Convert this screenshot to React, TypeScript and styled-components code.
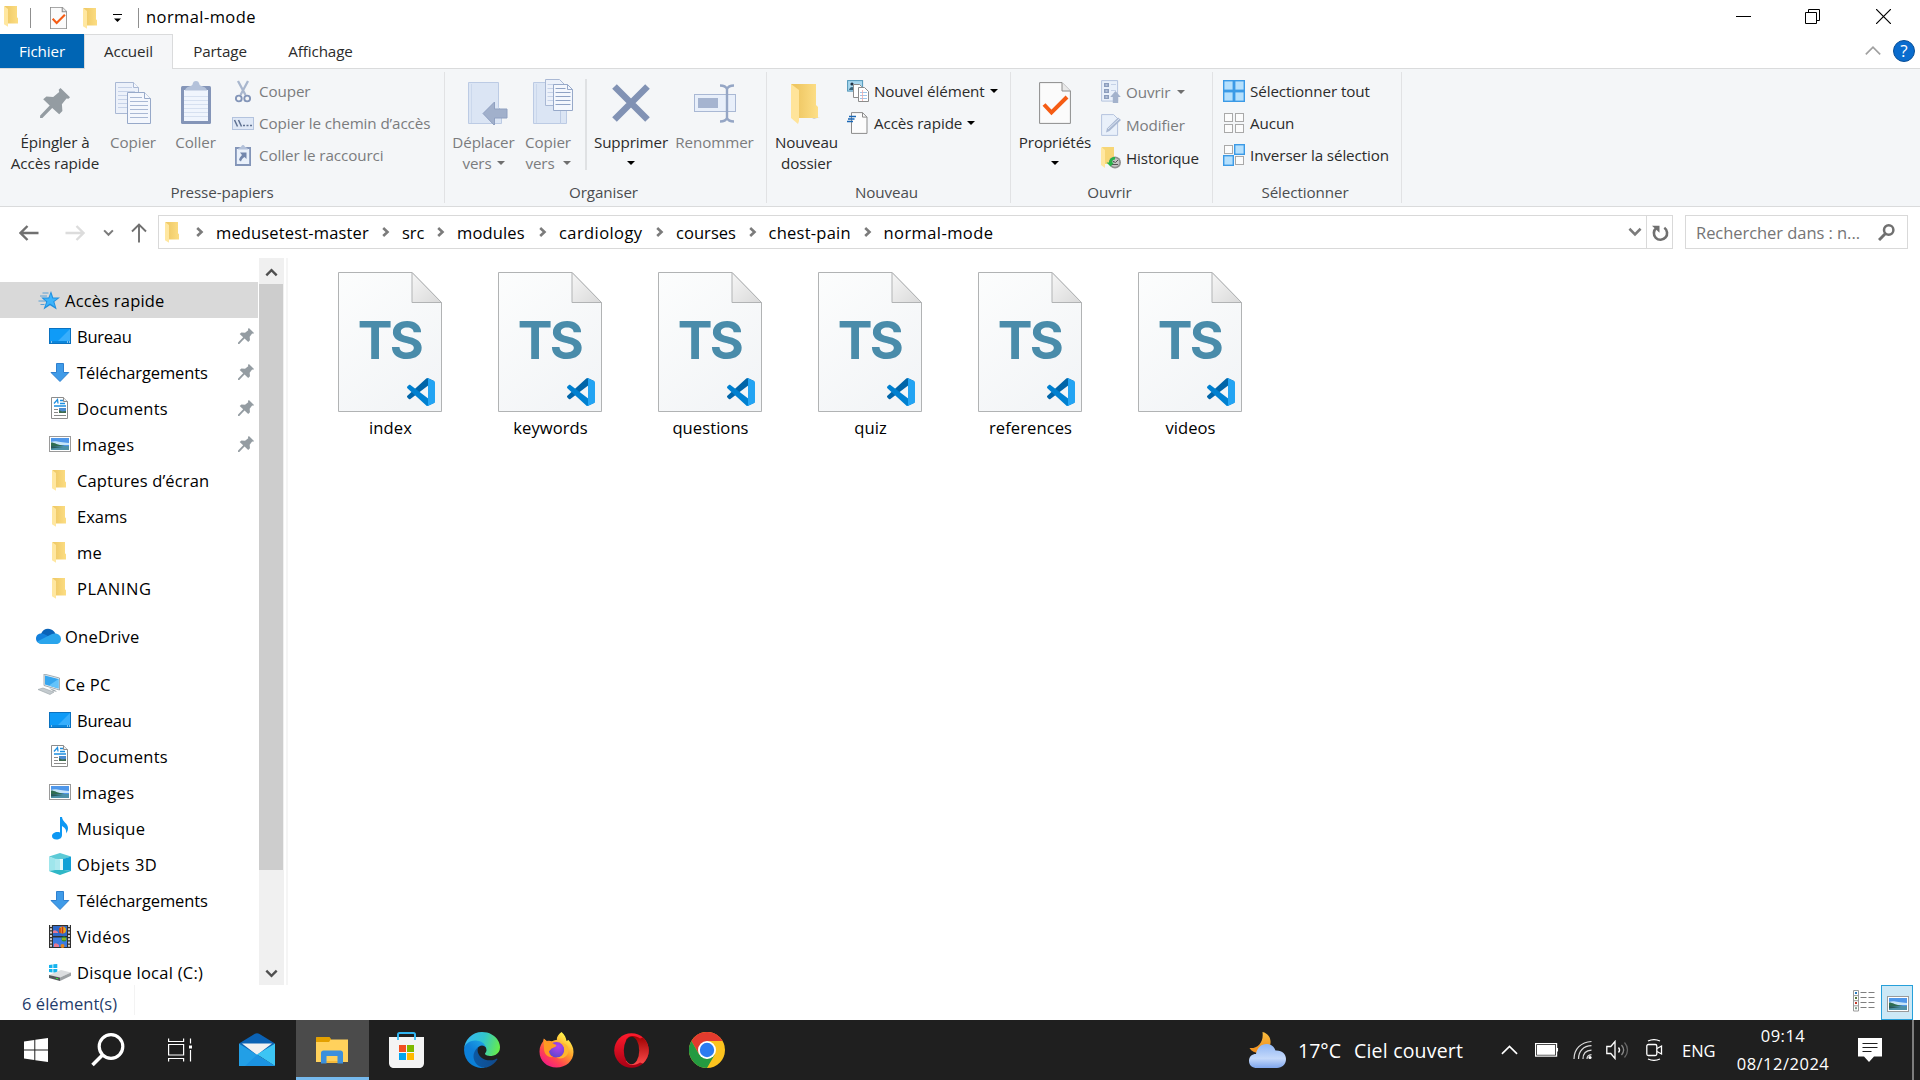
import React from "react";
import styled, { createGlobalStyle, css } from "styled-components";

const Global = createGlobalStyle`
  * { box-sizing: border-box; }
  html, body { margin: 0; padding: 0; background: #fff; overflow: hidden; }
  body { font-family: "Open Sans", "Noto Sans", sans-serif; color: #000; }
  svg { display: block; flex: none; }
`;

/* ---------- layout ---------- */

const Window = styled.div`
  width: 1920px;
  height: 1080px;
  display: flex;
  flex-direction: column;
  background: #fff;
  overflow: hidden;
  white-space: nowrap;
`;

const Text = styled.span<{ $size?: number; $ls?: number; $w?: number; $color?: string; $drop?: number }>`
  display: block;
  flex: none;
  font-size: ${(p) => p.$size ?? 16.5}px;
  letter-spacing: ${(p) => p.$ls ?? 0}px;
  ${(p) => p.$w !== undefined && css`width: ${p.$w}px;`}
  ${(p) => p.$color && css`color: ${p.$color};`}
  padding-top: ${(p) => p.$drop ?? 0}px;
  line-height: 20px;
`;

const RibbonText = styled.span`
  display: block;
  flex: none;
  font-size: 15.2px;
  letter-spacing: -0.1px;
  line-height: 20px;
`;

const Gap = styled.div<{ $w: number }>`
  flex: none;
  width: ${(p) => p.$w}px;
`;

const Spacer = styled.div`
  flex: 1;
`;

const TitleBar = styled.header`
  height: 34px;
  flex: none;
  display: flex;
  align-items: center;
  padding: 2px 0 0 4px;
`;

const Lift = styled.div<{ $by: number }>`
  padding-bottom: ${(p) => p.$by}px;
`;

const TitleRule = styled.div`
  width: 1px;
  height: 20px;
  background: #8f8f8f;
`;

const WindowButton = styled.div<{ $w: number; $up?: number }>`
  width: ${(p) => p.$w}px;
  height: 32px;
  display: flex;
  align-items: center;
  justify-content: center;
  padding-bottom: ${(p) => p.$up ?? 0}px;
`;

const HelpButton = styled.div`
  width: 22px;
  padding-top: 6px;
`;

const Tabs = styled.nav`
  height: 34px;
  flex: none;
  display: flex;
`;

const Tab = styled.div<{ $w: number; $kind?: "file" | "active" }>`
  width: ${(p) => p.$w}px;
  height: 34px;
  display: flex;
  align-items: center;
  justify-content: center;
  color: #2b2b2b;
  ${(p) =>
    p.$kind === "file" &&
    css`
      background: #0065b4;
      color: #fff;
    `}
  ${(p) =>
    p.$kind === "active" &&
    css`
      height: 35px;
      background: #f5f6f8;
      border: 1px solid #dadbdc;
      border-bottom: 0;
      padding-bottom: 2px;
      z-index: 1;
    `}
`;

const Ribbon = styled.section`
  height: 139px;
  flex: none;
  display: flex;
  background: #f4f6f8;
  border-top: 1px solid #dadbdc;
  border-bottom: 1px solid #dadbdc;
  padding: 3px 0;
`;

const Group = styled.div<{ $w: number }>`
  width: ${(p) => p.$w}px;
  height: 131px;
  display: flex;
  flex-direction: column;
  border-right: 1px solid #e1e2e4;
`;

const GroupBody = styled.div<{ $left?: number }>`
  flex: 1;
  display: flex;
  padding-left: ${(p) => p.$left ?? 0}px;
`;

const GroupLabel = styled.div<{ $shift?: number }>`
  height: 21px;
  display: flex;
  justify-content: center;
  padding-right: ${(p) => p.$shift ?? 0}px;
  color: #4b4d50;
`;

const BigButton = styled.div<{ $w: number; $off?: boolean }>`
  width: ${(p) => p.$w}px;
  flex: none;
  display: flex;
  flex-direction: column;
  align-items: center;
  color: ${(p) => (p.$off ? "#7b7c7e" : "#2b2b2b")};
`;

const BigIcon = styled.div<{ $top: number }>`
  height: 59px;
  padding-top: ${(p) => p.$top}px;
  flex: none;
  display: flex;
  align-items: flex-start;
  justify-content: center;
`;

const BigLine = styled.div<{ $gap?: number }>`
  height: 21px;
  display: flex;
  align-items: center;
  gap: ${(p) => p.$gap ?? 5}px;
`;

const GroupRule = styled.div`
  width: 2px;
  height: 91px;
  margin-top: 7px;
  background: #dfe1e3;
`;

const SmallList = styled.div<{ $pitch?: number }>`
  display: grid;
  grid-auto-rows: ${(p) => p.$pitch ?? 32}px;
  align-content: start;
  padding-top: 3px;
`;

const SmallButton = styled.div<{ $off?: boolean }>`
  display: flex;
  align-items: center;
  color: ${(p) => (p.$off ? "#7b7c7e" : "#2b2b2b")};
`;

const SmallIcon = styled.div<{ $w: number }>`
  width: ${(p) => p.$w}px;
  flex: none;
`;

const NavRow = styled.div`
  height: 51px;
  flex: none;
  display: flex;
  align-items: flex-start;
  padding-top: 8px;
`;

const NavButtons = styled.div`
  width: 158px;
  height: 36px;
  display: flex;
  align-items: center;
  padding-left: 19px;
`;

const AddressBox = styled.div`
  width: 1515px;
  height: 34px;
  border: 1px solid #d9d9d9;
  display: flex;
  align-items: center;
  padding-left: 6px;
`;

const Refresh = styled.div`
  width: 26px;
  height: 32px;
  border-left: 1px solid #d9d9d9;
  display: flex;
  align-items: center;
  justify-content: center;
  padding: 2px 0 0 1px;
`;

const SearchBox = styled.div`
  width: 223px;
  height: 34px;
  margin-left: 12px;
  border: 1px solid #d9d9d9;
  display: flex;
  align-items: center;
  padding-left: 10px;
`;

const Main = styled.main`
  height: 727px;
  flex: none;
  display: flex;
`;

const Sidebar = styled.aside`
  width: 258px;
  height: 727px;
  overflow: hidden;
  padding-top: 24px;
`;

const SideRow = styled.div<{ $root?: boolean; $selected?: boolean }>`
  height: 36px;
  display: flex;
  align-items: center;
  padding-left: ${(p) => (p.$root ? 36 : 49)}px;
  background: ${(p) => (p.$selected ? "#d9d9d9" : "transparent")};
`;

const SideIcon = styled.div<{ $root?: boolean }>`
  width: ${(p) => (p.$root ? 29 : 28)}px;
  flex: none;
  display: flex;
`;

const SideGap = styled.div`
  height: 12px;
`;

const PinSlot = styled.div`
  margin-left: auto;
  padding-right: 4px;
`;

const ScrollBar = styled.div`
  width: 25px;
  margin-left: 1px;
  background: #f0f0f0;
  display: flex;
  flex-direction: column;
  justify-content: space-between;
`;

const ScrollArrow = styled.div`
  height: 26px;
  display: flex;
  align-items: center;
  justify-content: center;
  padding: 3px 1px 0 0;
`;

const Thumb = styled.div`
  width: 24px;
  height: 586px;
  margin-bottom: auto;
  background: #cdcdcd;
`;

const PaneRule = styled.div`
  width: 2px;
  margin-left: 2px;
  background: #f5f5f5;
`;

const Files = styled.div`
  display: flex;
  padding: 14px 0 0 22px;
`;

const File = styled.div`
  width: 160px;
  display: flex;
  flex-direction: column;
  align-items: center;
  gap: 6px;
`;

const FileName = styled.span`
  font-size: 16.6px;
  letter-spacing: 0.05px;
  line-height: 20px;
  padding-left: 1px;
`;

const Sheet = styled.div`
  display: grid;
  > * {
    grid-area: 1 / 1;
  }
`;

const SheetMark = styled.span`
  font: 700 52px/60px Inter, sans-serif;
  letter-spacing: -2.6px;
  color: #4a8caa;
  justify-self: center;
  margin-top: 39px;
  padding-right: 1px;
`;

const SheetBadge = styled.div`
  justify-self: end;
  align-self: end;
  padding: 0 7px 6px 0;
`;

const StatusBar = styled.footer`
  height: 35px;
  flex: none;
  display: flex;
  align-items: flex-end;
  padding-left: 22px;
  color: #1f3c6b;
`;

const StatusText = styled.div`
  height: 30px;
  width: 113px;
  border-right: 1px solid #f3f3f3;
  margin-bottom: 5px;
  padding-top: 9px;
`;

const ViewButton = styled.div<{ $active?: boolean }>`
  width: 32px;
  height: 35px;
  display: flex;
  align-items: center;
  justify-content: center;
  padding: 0 0 3px 1px;
  ${(p) =>
    p.$active &&
    css`
      background: #cce8f6;
      border: 1px solid #26a0da;
      padding: 2px 0 0 2px;
    `}
`;

const Taskbar = styled.div`
  height: 60px;
  flex: none;
  display: flex;
  align-items: stretch;
  background: #1f1f1f;
  color: #fff;
`;

const TaskCell = styled.div<{ $w: number; $active?: boolean; $nudge?: number }>`
  width: ${(p) => p.$w}px;
  flex: none;
  display: flex;
  align-items: center;
  justify-content: center;
  padding-left: ${(p) => p.$nudge ?? 0}px;
  ${(p) =>
    p.$active &&
    css`
      background: #4b4b4b;
      border-bottom: 3px solid #76b9ed;
      padding: 3px 1px 0 0;
    `}
`;

const TrayItem = styled.div<{ $w: number }>`
  width: ${(p) => p.$w}px;
  flex: none;
  display: flex;
  align-items: center;
`;

const Clock = styled.div`
  width: 104px;
  display: flex;
  flex-direction: column;
  align-items: center;
  padding-top: 6px;
  gap: 8px;
`;

const DesktopEdge = styled.div`
  width: 8px;
  border-left: 2px solid #7d7d7d;
`;

/* ---------- icons ---------- */

const Folder = ({ w = 14, h = 21 }: { w?: number; h?: number }) => (
  <svg width={w} height={h} viewBox="0 0 14 21" preserveAspectRatio="none">
    <defs>
      <linearGradient id="fold" x1="0" x2="1">
        <stop offset="0.2" stopColor="#f0cb69" />
        <stop offset="1" stopColor="#fcdd83" />
      </linearGradient>
    </defs>
    <path d="M0.3 0H13v11.3l1 1V17.5H4z" fill="url(#fold)" />
    <path d="M0 0l4 3v17.8L0 18.2z" fill="#ffe7a0" />
  </svg>
);

const BigFolder = () => (
  <svg width="30" height="42" viewBox="0 0 30 42">
    <defs>
      <linearGradient id="bfold" x1="0" x2="1">
        <stop offset="0.2" stopColor="#efc763" />
        <stop offset="1" stopColor="#fddf88" />
      </linearGradient>
    </defs>
    <path d="M22 35l8-1-6 2z" fill="#ccc" />
    <path d="M1 1h25v21l2 2v11H8z" fill="url(#bfold)" />
    <path d="M1 1l8 6v31l-1 3-7-6z" fill="#ffe49a" />
  </svg>
);

const CheckSheet = ({ w = 17, h = 22, s = 1 }: { w?: number; h?: number; s?: number }) => (
  <svg width={w} height={h} viewBox="0 0 32 42" preserveAspectRatio="none">
    <path d="M0.6 0.6H23L31.4 9V41.4H0.6z" fill="#fbfbfb" stroke="#8c8c8c" strokeWidth={s} />
    <path d="M23 .6V9h8.4" fill="#e9e9e9" stroke="#8c8c8c" strokeWidth={s} />
    <path d="M5 22.5l7.5 8L28 15" fill="none" stroke="#f55c14" strokeWidth="4" />
  </svg>
);

const Pin = ({ size = 30 }: { size?: number }) => (
  <svg width={size} height={size} viewBox="0 0 30 30">
    <path
      d="M20.5 0L30 9.3l-1.5 1.5-2-.3-4.6 5.7.5 6.8-3.2 3.3-7-6.4L2.4 30 0 30l.2-2.6L9.7 17.5 3.2 11.3 6.4 8.5l6.8.4L19.2 4l-.5-2.3z"
      fill="#949ca2"
    />
  </svg>
);

const CopyPages = ({ w = 36, h = 42 }: { w?: number; h?: number }) => (
  <svg width={w} height={h} viewBox="0 0 36 42" fill="#f4f7fd" stroke="#a9b8d4">
    <path d="M.5.5h18l5 5v26H.5z" fill="#ecf1fa" />
    <path d="M3 5.5h14M3 9.500h17M3 13.500h17M3 17.500h17M3 21.500h17M3 25.500h17" stroke="#c6d2e8" />
    <path d="M18.500.5v5h5" />
    <path d="M12.500 10.500h17l6 6v25h-23z" stroke="#97a9c9" />
    <path d="M15 15.500h12M15 19.500h18M15 23.500h18M15 27.500h18M15 31.500h18M15 35.500h18" stroke="#a9b8d4" />
    <path d="M29.500 10.500v6h6" stroke="#97a9c9" />
  </svg>
);

const Clipboard = () => (
  <svg width="30" height="43" viewBox="0 0 30 43">
    <rect x="0" y="5" width="30" height="38" rx="1.500" fill="#8495b8" />
    <rect x="3" y="9" width="24" height="31" fill="#f0f5fd" />
    <path d="M3 15.500h24M3 19.500h24M3 23.500h24M3 27.500h24M3 31.500h24M3 35.500h24" stroke="#d6e0f0" />
    <path d="M4 9.500c0-4 7-4 7.500-6C12 1 13 0 15 0s3 1 3.500 3.500C19 5.500 26 5.500 26 9.500z" fill="#b4c2da" />
  </svg>
);

const Scissors = () => (
  <svg width="16" height="23" viewBox="0 0 16 23" fill="none">
    <path d="M3 1l7.500 14M13 1L5.500 15" stroke="#a9b7ce" strokeWidth="2.300" />
    <circle cx="3.800" cy="18.500" r="2.900" stroke="#8395b8" strokeWidth="1.900" />
    <circle cx="12.200" cy="18.500" r="2.900" stroke="#8395b8" strokeWidth="1.900" />
  </svg>
);

const PathIcon = () => (
  <svg width="22" height="13" viewBox="0 0 22 13">
    <rect x=".5" y=".5" width="21" height="12" fill="#dfe8f6" stroke="#b3c3de" />
    <path d="M2.500 3l3 6.500M6.500 3l3 6.500" stroke="#5f7191" strokeWidth="1.500" />
    <path d="M11 8.500h2M14.500 8.500h2M18 8.500h2" stroke="#5f7191" strokeWidth="1.500" />
  </svg>
);

const PasteShortcut = () => (
  <svg width="16" height="22" viewBox="0 0 16 22">
    <path d="M0 3h16v19H0z" fill="#8395b8" />
    <path d="M1.800 5h12.400v15H1.800z" fill="#eaf1fb" />
    <path d="M3 5.500c0-2 3-2 3.500-3.500C7 .500 9 .500 9.500 2 10 3.500 13 3.500 13 5.500z" fill="#b4c2da" />
    <path d="M5 8.500h6.500V15l-2-2c-2 1.500-3 2.500-3.500 4.500L4 16c.5-2 1.500-3.500 3-5z" fill="#7387ad" />
  </svg>
);

const MoveTo = () => (
  <svg width="40" height="43" viewBox="0 0 40 43">
    <path d="M.5.5h30v25l3 3v13H.500z" fill="#dbe5f4" stroke="#bccbe4" />
    <path d="M3.500 2v39" stroke="#cbd8ec" />
    <path d="M15 31.500L26.500 20v7H39v9H26.500v7.500z" fill="#a1b0cb" stroke="#8fa0c0" />
  </svg>
);

const CopyTo = () => (
  <svg width="40" height="46" viewBox="0 0 40 46">
    <path d="M.5 3.500h27v41H.500z" fill="#dbe5f4" stroke="#bccbe4" />
    <path d="M27.500 30h6v14.500h-6z" fill="#dbe5f4" stroke="#bccbe4" />
    <path d="M3.500 5v39" stroke="#cbd8ec" />
    <path d="M12.500.5h14l5 5v21h-19z" fill="#ecf1fa" stroke="#a9b8d4" />
    <path d="M14.500 5.500h10M14.500 9.500h10M14.500 13.500h10M14.500 17.500h10M14.500 21.500h10" stroke="#c6d2e8" />
    <path d="M20.500 5.500h14l5 5v21h-19z" fill="#f4f7fd" stroke="#97a9c9" />
    <path d="M22.500 9.500h10M22.500 13.500h15M22.500 17.500h15M22.500 21.500h15M22.500 25.500h15" stroke="#8fa2c4" />
    <path d="M34.500 5.500v5h5" fill="none" stroke="#97a9c9" />
  </svg>
);

const Cross = () => (
  <svg width="38" height="38" viewBox="0 0 38 38">
    <path d="M2.500 2.500l33 33M35.500 2.500l-33 33" stroke="#8192b4" strokeWidth="6.500" />
  </svg>
);

const Rename = () => (
  <svg width="42" height="39" viewBox="0 0 42 39" fill="none">
    <rect x=".5" y="10.500" width="41" height="17" fill="#e8effa" stroke="#a9b8d4" />
    <rect x="4" y="14" width="20" height="10" fill="#a5b4d0" />
    <path
      d="M33 4.500v30M26 1.500c4 0 6 1 7 3.500 1-2.500 3-3.500 7-3.500M26 37.500c4 0 6-1 7-3.500 1 2.500 3 3.500 7 3.500"
      stroke="#95a6c5"
      strokeWidth="2.400"
    />
  </svg>
);

const NewItem = () => (
  <svg width="22" height="22" viewBox="0 0 22 22">
    <rect x=".6" y=".6" width="15" height="10.500" fill="#a8d8ef" stroke="#4f95b8" />
    <circle cx="5" cy="4" r="1.600" fill="#234" />
    <path d="M2 10c1-4 5-4 6 0z" fill="#37657c" />
    <path d="M6.500 4.500h6l2 2v11h-8z" fill="#fff" stroke="#8b8b8b" />
    <path d="M11.500 7.500h6l4 4v10h-10z" fill="#fff" stroke="#8b8b8b" />
    <path d="M13 12.500h7M13 15.500h7M13 18.500h7" stroke="#9dc5ea" />
    <path d="M15.500 10v11" stroke="#eaa" strokeWidth=".8" />
  </svg>
);

const EasyAccess = () => (
  <svg width="21" height="22" viewBox="0 0 21 22">
    <path d="M4.500.6h11l4.500 4.500v16.300H4.500z" fill="#fcfcfc" stroke="#8b8b8b" />
    <path d="M15.500.6v4.500H20" fill="none" stroke="#8b8b8b" />
    <path d="M2 4.500h7M1 7h6.500M0 9.500h6" stroke="#1a67b5" strokeWidth="1.300" />
  </svg>
);

const OpenIcon = () => (
  <svg width="20" height="23" viewBox="0 0 20 23">
    <path d="M.6.6h16v20.500H.6z" fill="#e9f0fa" stroke="#b5c4de" />
    <path d="M3 3h5v4H3zM3 9h5v4H3zM3 15h5v4H3z" fill="#8c9dbd" />
    <path d="M4.500 4.500h2v1h-2zM4.500 10.500h2v1h-2zM4.500 16.500h2v1h-2z" fill="#dce6f5" />
    <path d="M10 4.500h5M10 10.500h5" stroke="#c4d1e7" />
    <path d="M14.500 11l5.300 6h-2.600v6h-5.400v-6H9.200z" fill="#a3b2cc" />
  </svg>
);

const EditIcon = () => (
  <svg width="20" height="22" viewBox="0 0 20 22">
    <path d="M.6.600h12l4 4v16.800H.6z" fill="#e9f0fa" stroke="#b5c4de" />
    <path d="M5 18.500l1-4L17 3.500l3 2.500L8.500 17z" fill="#a9b8d2" />
    <path d="M7 15L18 5" stroke="#dde6f4" />
  </svg>
);

const History = () => (
  <svg width="20" height="22" viewBox="0 0 20 22">
    <path d="M1 0h12v17H4z" fill="#f7d676" />
    <path d="M0 0l4 3v18l-4-3z" fill="#ffe7a0" />
    <circle cx="14" cy="15.500" r="6" fill="#8f8f8f" />
    <circle cx="14" cy="15.500" r="4.300" fill="#c4c4c4" />
    <path d="M11.500 14l3 1.500 2.500-2.500M11 17.500h6" stroke="#555" fill="none" />
    <path d="M14 10c-4 0-6 2.500-6 5.500H5.500l4 4 3.500-4h-2c0-2 1-3 3-3z" fill="#29b34a" />
  </svg>
);

const SelectGrid = ({ on }: { on: number[] }) => (
  <svg width="22" height="22" viewBox="0 0 22 22">
    {[0, 1, 2, 3].map((i) => {
      const x = (i % 2) * 11;
      const y = i > 1 ? 11 : 0;
      return on.includes(i) ? (
        <rect key={i} x={x + 0.7} y={y + 0.7} width="9.600" height="9.600" fill="#b5e0fd" stroke="#3b9ae6" strokeWidth="1.400" />
      ) : (
        <rect key={i} x={x + 1.500} y={y + 1.500} width="8" height="8" fill="#fcfcfc" stroke="#a9a9a9" />
      );
    })}
  </svg>
);

const Caret = ({ color = "#2b2b2b" }: { color?: string }) => (
  <svg width="8" height="4" viewBox="0 0 8 4">
    <path d="M0 0h8L4 4z" fill={color} />
  </svg>
);

const Chevron = ({ w = 8, h = 10 }: { w?: number; h?: number }) => (
  <svg width={w} height={h} viewBox="0 0 8 10">
    <path d="M1.200 1l4.300 4-4.300 4" fill="none" stroke="#7b7b7b" strokeWidth="2.600" />
  </svg>
);

const DownChevron = ({ w, color = "#7b7b7b", sw = 2.600, up }: { w: number; color?: string; sw?: number; up?: boolean }) => (
  <svg width={w} height={w * 0.7} viewBox="0 0 14 10">
    <path d={up ? "M1.300 8.200L7 2.500l5.700 5.700" : "M1.300 1.800L7 7.500l5.700-5.700"} fill="none" stroke={color} strokeWidth={sw} />
  </svg>
);

const Arrow = ({ color }: { color: string }) => (
  <svg width="20" height="16" viewBox="0 0 20 16">
    <path d="M19.500 8H2M8.500 1L1.500 8l7 7" fill="none" stroke={color} strokeWidth="2.400" />
  </svg>
);

const Flip = styled.div`
  transform: scaleX(-1);
`;

const QuickStar = () => (
  <svg width="24" height="19" viewBox="0 0 24 19">
    <path d="M15 0l2.200 6.500H24l-5.600 4.200 2.300 7.800-6.700-4.300-6.500 4.300 2.700-7.500L5.200 6.500h7.300z" fill="#1f8fdf" />
    <path d="M14.800 2.500l1.600 5h5l-4.200 3 1.800 5.300-5-3.300-4.600 3.300 2-5.400L7.500 7.500h5.700z" fill="#3db4fb" />
    <path d="M6.500 2h6M4 5h7M2.500 10h7M4.500 13.500h4" stroke="#5aa0d4" />
  </svg>
);

const Desktop = () => (
  <svg width="22" height="16" viewBox="0 0 22 16">
    <rect x=".5" y=".5" width="21" height="15" fill="#0f9bf7" stroke="#0b72c0" />
    <path d="M21 1v12H9z" fill="#38aefc" />
    <path d="M1 14h20" stroke="#0b72c0" />
    <path d="M2 14h1M18 14h1M20 14h1" stroke="#fff" />
  </svg>
);

const Download = () => (
  <svg width="22" height="19" viewBox="0 0 22 19">
    <path d="M7.500.5h7V9.500h5.300L11 18.500 2 9.500h5.500z" fill="#3f9be8" stroke="#2f80cf" />
  </svg>
);

const Doc = () => (
  <svg width="22" height="22" viewBox="0 0 22 22">
    <path d="M2.500.5h12l4 4v17h-16z" fill="#fff" stroke="#8c8c8c" />
    <path d="M14.500.5v4h4" fill="#eee" stroke="#8c8c8c" />
    <path d="M5 6.500l3.500-4 .5 4M11 3.500h3M11 6.500h5M5 9h12" stroke="#1e8fe0" fill="none" strokeWidth="1.300" />
    <path d="M5 12.500h4M5 15.500h4M5 18.500h12" stroke="#8a8a8a" />
    <rect x="10" y="11" width="7" height="5" fill="#4a8ad0" />
    <path d="M10 16v-3l3 1.500 4-.5v2z" fill="#3d6b4d" />
  </svg>
);

const Picture = () => (
  <svg width="22" height="16" viewBox="0 0 22 16">
    <rect x=".5" y=".5" width="21" height="15" fill="#fff" stroke="#9a9a9a" />
    <rect x="2" y="2" width="18" height="12" fill="#4f97ea" />
    <path d="M2 6c4-2 8 0 18 1v2H2z" fill="#c6e4f8" />
    <path d="M2 6.500c4 0 6 2.500 14 3.500H2z" fill="#2f6d52" />
    <path d="M2 10h18v4H2z" fill="#4d91a8" />
    <path d="M2 10c5 0 8 1 12 1L2 12.500z" fill="#275a5a" />
  </svg>
);

const Cloud = () => (
  <svg width="25" height="16" viewBox="0 0 25 16">
    <path d="M5 6C7 0 14-1 18 3.500l1.500 2L9 11z" fill="#0a63b8" />
    <path d="M5.500 15.500C1.500 15.500 0 13 0 10.500 0 7 3 5 6.500 5.500c3 .5 5 2.500 8 4.500L9 15z" fill="#1380dc" />
    <path d="M16 6c3-1.500 9 0 9 5 0 3-2 5-5 5H5.500c-2 0-3.500-1-4.300-2.500z" fill="#2aa5ec" />
  </svg>
);

const ThisPC = () => (
  <svg width="25" height="21" viewBox="0 0 25 21">
    <path d="M8 0l15.500 4v12L8 11.500z" fill="#e9eef1" stroke="#8d9aa2" strokeWidth=".8" />
    <path d="M9 1.500l13.500 3.500v9.500L9 10.500z" fill="#36a6ef" />
    <path d="M22.500 5v9.500L13 11.600z" fill="#64c3fa" />
    <path d="M13 14l6 2 2 2-4-1z" fill="#a5adb2" />
    <path d="M2 15.500l5-1.500 11 4-4 2.500z" fill="#c3cace" stroke="#99a1a6" strokeWidth=".6" />
  </svg>
);

const Music = () => (
  <svg width="22" height="23" viewBox="0 0 22 23">
    <path
      d="M11 0h2c.5 5 6 6.500 6 11 0 2.500-1 4-2 5.500.5-3 0-5-4-7.500V18c0 3-2.500 4.500-5.500 4.500-3 0-4.500-1.500-4.500-3.500 0-2.500 4-5 8-3.500z"
      fill="#0e98f3"
    />
  </svg>
);

const Objects3D = () => (
  <svg width="22" height="22" viewBox="0 0 22 22">
    <path d="M0 3.500L11 0l11 3.500L15 6H6z" fill="#5ccad6" />
    <path d="M0 3.500L6 6v11l-6 1z" fill="#c5f1f3" />
    <path d="M6 6h9v11H6z" fill="#e6f9fb" />
    <path d="M0 3.500L11 6.500V17l-11 1z" fill="#7fdde5" opacity=".55" />
    <path d="M22 3.500L14 6v11l8 1z" fill="#13a0d6" />
    <path d="M0 18l6-1h9l7 1-11 4z" fill="#2fb7c6" />
  </svg>
);

const Film = () => (
  <svg width="22" height="23" viewBox="0 0 22 23">
    <rect width="22" height="23" fill="#2f2f2f" />
    <path d="M2 0v23M20 0v23" stroke="#e4e4e4" strokeWidth="1.800" strokeDasharray="2 1.300" />
    <rect x="4" y="1" width="14" height="10" fill="#2f68c8" />
    <rect x="4" y="12.500" width="14" height="9.500" fill="#3c7be0" />
    <circle cx="13.500" cy="5" r="3.500" fill="#e5a81e" />
    <path d="M13.500 1.500v7M11 3v5" stroke="#c9301f" strokeWidth="1.500" />
    <path d="M4 6c2-2 4 0 5 1v1H4z" fill="#e87890" />
    <circle cx="15" cy="14" r="2.500" fill="#34952f" />
    <path d="M13 14h4" stroke="#e5c91e" />
    <path d="M5 19c2-2 4 0 5 1v2H5z" fill="#e87890" />
    <circle cx="13.500" cy="21" r="2" fill="#e5871e" />
  </svg>
);

const Disk = () => (
  <svg width="22" height="18" viewBox="0 0 22 18">
    <path d="M0 2l3.500-.5V5H0zM4.300 1.300L8.300 1v4h-4zM0 6h3.500v3.500L0 9zM4.300 6h4v4l-4-.4z" fill="#14b3ee" />
    <path d="M0 12l12-5 10 2.500-11 5z" fill="#dcdee0" />
    <path d="M0 12l11 2.500V18L0 15z" fill="#54585b" />
    <path d="M11 14.500l11-5v3.300L11 18z" fill="#9da1a4" />
    <path d="M7 15.500h2" stroke="#3d3" strokeWidth="1.200" />
  </svg>
);

const SheetPage = () => (
  <svg width="104" height="140" viewBox="0 0 104 140">
    <defs>
      <linearGradient id="sheet" x1="0" y1="0" x2=".6" y2="1">
        <stop offset="0" stopColor="#fcfdfd" />
        <stop offset="1" stopColor="#f3f5f7" />
      </linearGradient>
      <linearGradient id="dogear" x1="0" y1="0" x2="1" y2="1">
        <stop offset="0" stopColor="#f6f6f6" />
        <stop offset="1" stopColor="#d9d9d9" />
      </linearGradient>
    </defs>
    <path d="M.5.5H74l29.500 30v109H.5z" fill="url(#sheet)" stroke="#b1b3b4" />
    <path d="M74 .5v30h29.500z" fill="url(#dogear)" stroke="#b1b3b4" />
  </svg>
);

const CodeBadge = () => (
  <svg width="28" height="28" viewBox="0 0 100 100">
    <path
      fill="#0065a9"
      d="M96.4614 10.7962L75.8569 0.875542C73.4719 -0.272773 70.6217 0.211611 68.75 2.08333L1.29858 63.5832C-0.515693 65.2373 -0.513607 68.0937 1.30308 69.7452L6.81272 74.754C8.29793 76.1042 10.5347 76.2036 12.1338 74.9905L93.3609 13.3699C96.086 11.3026 100 13.2462 100 16.6667V16.4275C100 14.0265 98.6246 11.8378 96.4614 10.7962Z"
    />
    <path
      fill="#0080d0"
      d="M96.4614 89.2038L75.8569 99.1245C73.4719 100.273 70.6217 99.7884 68.75 97.9167L1.29858 36.4169C-0.515693 34.7627 -0.513607 31.9063 1.30308 30.2548L6.81272 25.246C8.29793 23.8958 10.5347 23.7964 12.1338 25.0095L93.3609 86.6301C96.086 88.6974 100 86.7538 100 83.3334V83.5726C100 85.9735 98.6246 88.1622 96.4614 89.2038Z"
    />
    <path
      fill="#23a4f3"
      d="M75.8578 99.1263C73.4721 100.274 70.6219 99.7885 68.75 97.9166C71.0564 100.223 75 98.5895 75 95.3278V4.67213C75 1.41039 71.0564 -0.223106 68.75 2.08329C70.6219 0.211402 73.4721 -0.273666 75.8578 0.873633L96.4587 10.7807C98.6234 11.8217 100 14.0112 100 16.4132V83.5871C100 85.9891 98.6234 88.1786 96.4586 89.2196L75.8578 99.1263Z"
    />
  </svg>
);

const ListView = () => (
  <svg width="22" height="22" viewBox="0 0 22 22">
    <path d="M.5.5h5v20.500h-5zM.5 5.600h5M.5 10.700h5M.5 15.800h5" fill="#fff" stroke="#9a9a9a" />
    <rect x="2" y="2" width="2" height="2" fill="#2b7cc0" />
    <rect x="2" y="7" width="2" height="2" fill="#5a7a3a" />
    <rect x="2" y="12" width="2" height="2" fill="#c43a2a" />
    <rect x="2" y="17.200" width="2" height="2" fill="#7fa08a" />
    <path
      d="M7.500 2.500h6M15.500 2.500h6M7.500 7.500h6M15.500 7.500h6M7.500 12.500h6M15.500 12.500h6M7.500 17.500h6M15.500 17.500h6"
      stroke="#7f7f7f"
    />
  </svg>
);

const WinLogo = () => (
  <svg width="24" height="24" viewBox="0 0 24 24" fill="#fff">
    <path d="M0 3.400L10.300 2v9.500H0zM11.300 1.800L24 0v11.500H11.300zM0 12.500h10.300V22L0 20.600zM11.300 12.500H24V24l-12.700-1.800z" />
  </svg>
);

const Search = () => (
  <svg width="34" height="34" viewBox="0 0 34 34" fill="none" stroke="#fff">
    <circle cx="20" cy="13.500" r="11.800" strokeWidth="3.200" />
    <path d="M11.500 22L1.500 32" strokeWidth="3.600" />
  </svg>
);

const TaskView = () => (
  <svg width="25" height="24" viewBox="0 0 25 24" fill="none" stroke="#fff" strokeWidth="1.200">
    <path d="M.6.5v3h15v-3M.6 23.500v-3h15v3M.6 6.500h15v10.500H.600zM22.500.5v5M22.500 12v11.500" />
    <path d="M21 7.500h3v3h-3z" fill="#fff" stroke="none" />
  </svg>
);

const Mail = () => (
  <svg width="36" height="34" viewBox="0 0 36 34">
    <path d="M0 10.500L15.500 1c1.500-1 3.500-1 5 0L36 10.500 18 24z" fill="#0b62b4" />
    <path d="M3 10.500h30L18 22z" fill="#f1f1f1" />
    <path d="M36 10.500V33L18 21.500z" fill="#3cc5f4" />
    <path d="M0 10.500L36 33H0z" fill="#229fe6" />
    <path d="M18 21.700L36 33H6z" fill="#1b93e2" />
  </svg>
);

const ExplorerIcon = () => (
  <svg width="32" height="27" viewBox="0 0 32 27">
    <path d="M0 1.500C0 .700.700 0 1.500 0h11L15 2.500h17V25H0z" fill="#ffd15c" />
    <path d="M0 1.500C0 .700.700 0 1.500 0h12L15 2l-2 3H0z" fill="#e3a000" />
    <path d="M6 24h20v2H6z" fill="#f5b93a" />
    <path d="M5 16c0-1.500 1-2.500 2.500-2.500h17c1.500 0 2.500 1 2.500 2.500v10.500h-5.500V19h-11v7.500H5z" fill="#3b8fdc" />
  </svg>
);

const Store = () => (
  <svg width="35" height="36" viewBox="0 0 35 36">
    <path d="M9 8V2.500c0-.8.700-1.500 1.500-1.500h14c.8 0 1.500.7 1.500 1.500V8" fill="none" stroke="#30b5f2" strokeWidth="2" />
    <path d="M0 5h35v26c0 3-2 5-5 5H5c-3 0-5-2-5-5z" fill="#f4f4f4" />
    <path d="M8 5h2v3H8zM25 5h2v3h-2z" fill="#4cc3f5" />
    <path d="M10 13h7v7h-7z" fill="#f25022" />
    <path d="M18 13h7v7h-7z" fill="#7fba00" />
    <path d="M10 21h7v7h-7z" fill="#00a4ef" />
    <path d="M18 21h7v7h-7z" fill="#ffb900" />
  </svg>
);

const Edge = () => (
  <svg width="36" height="36" viewBox="0 0 256 256">
    <defs>
      <linearGradient id="ea" x1="60" y1="178" x2="237" y2="178" gradientUnits="userSpaceOnUse">
        <stop stopColor="#0c59a4" />
        <stop offset="1" stopColor="#114a8b" />
      </linearGradient>
      <linearGradient id="eb" x1="150" y1="100" x2="45" y2="220" gradientUnits="userSpaceOnUse">
        <stop stopColor="#1b9de2" />
        <stop offset=".5" stopColor="#0f7fd8" />
        <stop offset="1" stopColor="#0a80d8" />
      </linearGradient>
      <linearGradient id="ec" x1="10" y1="60" x2="245" y2="130" gradientUnits="userSpaceOnUse">
        <stop stopColor="#35b8f1" />
        <stop offset=".5" stopColor="#32c5cc" />
        <stop offset="1" stopColor="#66eb4b" />
      </linearGradient>
    </defs>
    <path
      fill="url(#ea)"
      d="M231 190.500c-3.400 1.800-6.900 3.400-10.500 4.700a101.500 101.500 0 0 1-35.800 6.500c-47.200 0-88.300-32.500-88.300-74.200a31.500 31.500 0 0 1 16.400-27.300c-42.700 1.800-53.700 46.300-53.700 72.400 0 73.900 68 81.300 82.700 81.300 7.900 0 19.800-2.300 27-4.600l1.300-.4a128.300 128.300 0 0 0 66.600-52.800 4 4 0 0 0-5.700-5.600z"
    />
    <path
      fill="url(#eb)"
      d="M105.700 241.400a79.200 79.200 0 0 1-22.700-21.300 80.700 80.700 0 0 1 29.800-120c3.200-1.500 8.500-4.100 15.600-4a32.400 32.400 0 0 1 25.700 13 31.900 31.900 0 0 1 6.300 18.700c0-.2 24.500-79.600-80-79.600-43.900 0-80 41.700-80 78.200a130.200 130.200 0 0 0 12.100 56 128 128 0 0 0 156.400 67 75.500 75.500 0 0 1-62.800-8z"
    />
    <path
      fill="url(#ec)"
      d="M152.300 148.900c-.8 1-3.300 2.500-3.300 5.700 0 2.600 1.700 5.100 4.700 7.200 14.400 10 41.500 8.700 41.600 8.700a59.600 59.600 0 0 0 30.300-8.300 61.400 61.400 0 0 0 30.400-52.900c.3-22.400-8-37.300-11.300-43.900C223.500 23.900 177.700 0 128 0A128 128 0 0 0 0 126.200c.5-36.500 36.800-66 80-66 3.500 0 23.500.3 42 10a72.600 72.600 0 0 1 30.900 29.300c6.100 10.600 7.200 24.100 7.200 29.500s-2.700 13.300-7.800 19.900z"
    />
  </svg>
);

const Firefox = () => (
  <svg width="35" height="36" viewBox="0 0 35 36">
    <defs>
      <linearGradient id="ff" x1=".85" y1=".1" x2=".2" y2="1">
        <stop offset=".05" stopColor="#fff14a" />
        <stop offset=".4" stopColor="#ff9a2a" />
        <stop offset=".7" stopColor="#ff4550" />
        <stop offset="1" stopColor="#f0148c" />
      </linearGradient>
      <radialGradient id="ffp" cx=".6" cy=".3" r=".8">
        <stop offset="0" stopColor="#b441f0" />
        <stop offset="1" stopColor="#5648c8" />
      </radialGradient>
    </defs>
    <path
      d="M22.500 0c3.500 3 4.500 6 5 9l2-1c3 4 5 7 5 12 0 9-7.500 15.500-17 15.500S.500 29 .500 19.500c0-5 2-8 3.500-10l.8-3 3 2.500c2-.5 3.500-.5 5 .3 2-.8 4-1.300 5-1.300C17.500 5 19.500 2 22.500 0z"
      fill="url(#ff)"
    />
    <circle cx="17.500" cy="17.800" r="7.800" fill="url(#ffp)" />
    <path
      d="M5 7l4 3.500c3-1.200 5 1.500 8.500 2.500-.5 2.500-3.500 2.500-5 3.500-1 .8-1 2-2.500 2.500 0 3 1.500 5 4 6-5 1-9-3-9-8.500C5 13 4.500 10 5 7z"
      fill="#ff9b22"
    />
    <path d="M21.500 11c3 2 4.500 5 3.500 9-1 4-5 6-8 5.500 7 3 13-2 12.500-8-.3-4-3-6.500-8-6.500z" fill="#ffb62e" />
  </svg>
);

const Opera = () => (
  <svg width="35" height="35" viewBox="0 0 35 35">
    <defs>
      <linearGradient id="op1" x1="0" y1="0" x2="0" y2="1">
        <stop offset="0" stopColor="#ff1b2d" />
        <stop offset="1" stopColor="#a70014" />
      </linearGradient>
      <linearGradient id="op2" x1="0" y1="0" x2="0" y2="1">
        <stop offset="0" stopColor="#9c0000" />
        <stop offset="1" stopColor="#ff4b4b" />
      </linearGradient>
    </defs>
    <circle cx="17.500" cy="17.500" r="17.300" fill="url(#op1)" />
    <path
      d="M12 6.500C14 4 16 3 18.500 3c3 0 5.500 1 7.500 2.500l3-.9a17.300 17.300 0 0 1 0 25.800l-3-.9C24 31 21.500 32 18.500 32c-2.500 0-4.500-1-6.500-3.500z"
      fill="url(#op2)"
    />
    <ellipse cx="17.500" cy="17.500" rx="7.700" ry="13.800" fill="#1f1f1f" />
  </svg>
);

const Chrome = () => (
  <svg width="36" height="36" viewBox="0 0 36 36">
    <circle cx="18" cy="18" r="18" fill="#fcc31e" />
    <path d="M2.410 9A18 18 0 0 1 33.590 9H18l-7.800 13.500z" fill="#e33b2e" />
    <path d="M2.410 9l7.800 13.500L18 27l7.800-4.500L18 36A18 18 0 0 1 2.410 9z" fill="#249a41" />
    <circle cx="18" cy="18" r="9" fill="#fff" />
    <circle cx="18" cy="18" r="7.200" fill="#2b7bf0" />
  </svg>
);

const Weather = () => (
  <svg width="37" height="36" viewBox="0 0 37 36">
    <defs>
      <linearGradient id="cl" x1="0" y1="0" x2="0" y2="1">
        <stop offset="0" stopColor="#8fb6f4" />
        <stop offset=".6" stopColor="#c5d9fa" />
        <stop offset="1" stopColor="#7ea5ec" />
      </linearGradient>
      <linearGradient id="mo" x1="0" y1="0" x2="0" y2="1">
        <stop offset="0" stopColor="#f9bd3f" />
        <stop offset="1" stopColor="#ef8a1a" />
      </linearGradient>
    </defs>
    <path d="M13.500 0c9 2 11 13 3.500 19C11 23 3.500 21 .500 16 8 17 15 11 13.500 0z" fill="url(#mo)" />
    <path
      d="M8 36c-4.500 0-8-2.500-8-7s3-7 7-7c1-6 5-10 10.500-10 4.500 0 7.500 2.500 9 6.500C33 18 37 22 37 27c0 5.500-4 9-9 9z"
      fill="url(#cl)"
    />
  </svg>
);

const Battery = () => (
  <svg width="24" height="14" viewBox="0 0 24 14">
    <rect x=".6" y=".6" width="21" height="12.500" fill="none" stroke="#fff" strokeWidth="1.200" />
    <rect x="2" y="2" width="18.200" height="9.800" fill="#fff" />
    <path d="M22.300 5v3.500" stroke="#fff" strokeWidth="1.500" />
  </svg>
);

const Wifi = () => (
  <svg width="20" height="20" viewBox="0 0 20 20" fill="none" stroke="#dcdcdc" strokeWidth="1.200">
    <path d="M1 19C1 9 8 2 18.500 1.500M5.500 19c0-8 5-13 13-13.300M10 19c0-5 3-8.500 8.500-8.800M14 19c0-2.500 1.500-4 4.500-4.300" />
    <circle cx="17" cy="17.500" r="1.600" fill="#fff" stroke="none" />
  </svg>
);

const Volume = () => (
  <svg width="23" height="20" viewBox="0 0 23 20" fill="none" stroke="#fff" strokeWidth="1.300">
    <path d="M.8 6.500h4L9 1.500v17l-4.200-5H.8z" />
    <path d="M12.500 7.500c1.300 1.500 1.300 3.500 0 5" />
    <path d="M15.500 5c2.600 3 2.600 7 0 10" stroke="#8a8a8a" />
    <path d="M18.500 2.500c4 4.500 4 10.500 0 15" stroke="#666" />
  </svg>
);

const MeetNow = () => (
  <svg width="17" height="22" viewBox="0 0 17 22" fill="none" stroke="#fff" strokeWidth="1.300">
    <path d="M2 2c4-1.800 8-1.800 12 0M2 20c4 1.800 8 1.800 12 0" />
    <rect x=".8" y="5.500" width="10" height="11" rx="1.500" />
    <path d="M11 9.500l4.500-2.500v8L11 12.500" />
  </svg>
);

const Notify = () => (
  <svg width="24" height="24" viewBox="0 0 24 24">
    <path d="M0 0h24v18.500h-8L11 24l-5-5.500H0z" fill="#fff" />
    <path d="M4.500 5.500h15M4.500 9.500h15M4.500 13.500h9" stroke="#1f1f1f" strokeWidth="1.200" />
  </svg>
);

/* ---------- data ---------- */

type SideItem = {
  label: string;
  icon: React.ReactNode;
  ls?: number;
  root?: boolean;
  selected?: boolean;
  pinned?: boolean;
};

const sideFolder = (
  <>
    <Gap $w={3} />
    <Folder />
  </>
);

const sections: SideItem[][] = [
  [
    { label: "Accès rapide", icon: <QuickStar />, ls: 0.2, root: true, selected: true },
    { label: "Bureau", icon: <Desktop />, ls: -0.25, pinned: true },
    { label: "Téléchargements", icon: <Download />, ls: -0.1, pinned: true },
    { label: "Documents", icon: <Doc />, ls: 0.3, pinned: true },
    { label: "Images", icon: <Picture />, ls: 0.4, pinned: true },
    { label: "Captures d’écran", icon: sideFolder, ls: 0.15 },
    { label: "Exams", icon: sideFolder },
    { label: "me", icon: sideFolder, ls: 0.2 },
    { label: "PLANING", icon: sideFolder, ls: 0.6 },
  ],
  [{ label: "OneDrive", icon: <Cloud />, ls: 0.25, root: true }],
  [
    { label: "Ce PC", icon: <ThisPC />, ls: 0.3, root: true },
    { label: "Bureau", icon: <Desktop />, ls: -0.25 },
    { label: "Documents", icon: <Doc />, ls: 0.3 },
    { label: "Images", icon: <Picture />, ls: 0.4 },
    { label: "Musique", icon: <Music />, ls: 0.25 },
    { label: "Objets 3D", icon: <Objects3D />, ls: 0.5 },
    { label: "Téléchargements", icon: <Download />, ls: -0.1 },
    { label: "Vidéos", icon: <Film />, ls: 0.4 },
    { label: "Disque local (C:)", icon: <Disk />, ls: 0.25 },
  ],
];

const crumbs: { name: string; width: number; ls: number }[] = [
  { name: "medusetest-master", width: 166, ls: 0.15 },
  { name: "src", width: 35, ls: 0 },
  { name: "modules", width: 82, ls: 0.15 },
  { name: "cardiology", width: 97, ls: 0.42 },
  { name: "courses", width: 72.5, ls: 0.05 },
  { name: "chest-pain", width: 95, ls: 0.25 },
  { name: "normal-mode", width: 120, ls: 0.42 },
];

const files = ["index", "keywords", "questions", "quiz", "references", "videos"];

/* ---------- page ---------- */

export default function App() {
  return (
    <Window>
      <Global />
      <TitleBar>
        <Lift $by={3}>
          <Folder />
        </Lift>
        <Gap $w={12} />
        <TitleRule />
        <Gap $w={19} />
        <CheckSheet s={2} />
        <Gap $w={16} />
        <Folder />
        <Gap $w={16} />
        <svg width="9" height="9" viewBox="0 0 9 9">
          <path d="M0 .5h9" stroke="#000" />
          <path d="M1 4.500h7L4.500 8z" />
        </svg>
        <Gap $w={16} />
        <TitleRule />
        <Gap $w={7} />
        <Lift $by={2}>
          <Text $ls={0.42}>normal-mode</Text>
        </Lift>
        <Spacer />
        <WindowButton $w={69} $up={3}>
          <svg width="15" height="15" viewBox="0 0 15 15">
            <path d="M0 7.500h15" stroke="#000" />
          </svg>
        </WindowButton>
        <WindowButton $w={69} $up={3}>
          <svg width="15" height="15" viewBox="0 0 15 15" fill="none" stroke="#000">
            <path d="M.5 3.500h11v11H.500zM3.500 3.500V.5h11v11h-3" />
          </svg>
        </WindowButton>
        <WindowButton $w={73} $up={3}>
          <svg width="15" height="15" viewBox="0 0 15 15">
            <path d="M0 0l15 15M15 0L0 15" stroke="#000" strokeWidth="1.200" />
          </svg>
        </WindowButton>
      </TitleBar>

      <Tabs>
        <Tab $w={84} $kind="file">
          <RibbonText>Fichier</RibbonText>
        </Tab>
        <Tab $w={89} $kind="active">
          <RibbonText>Accueil</RibbonText>
        </Tab>
        <Tab $w={94}>
          <RibbonText>Partage</RibbonText>
        </Tab>
        <Tab $w={107}>
          <RibbonText>Affichage</RibbonText>
        </Tab>
        <Spacer />
        <WindowButton $w={18}>
          <DownChevron w={18} up color="#a0a0a0" sw={1.300} />
        </WindowButton>
        <Gap $w={11} />
        <HelpButton>
          <svg width="22" height="22" viewBox="0 0 22 22">
            <circle cx="11" cy="11" r="10.500" fill="#0a6cce" stroke="#0a4f96" />
            <text x="11" y="17" textAnchor="middle" fontSize="17" fill="#fff" fontFamily="Open Sans">
              ?
            </text>
          </svg>
        </HelpButton>
        <Gap $w={5} />
      </Tabs>

      <Ribbon>
        <Group $w={445}>
          <GroupBody $left={3}>
            <BigButton $w={104}>
              <BigIcon $top={16}>
                <Pin />
              </BigIcon>
              <BigLine>
                <RibbonText>Épingler à</RibbonText>
              </BigLine>
              <BigLine>
                <RibbonText>Accès rapide</RibbonText>
              </BigLine>
            </BigButton>
            <BigButton $w={52} $off>
              <BigIcon $top={10}>
                <CopyPages />
              </BigIcon>
              <BigLine>
                <RibbonText>Copier</RibbonText>
              </BigLine>
            </BigButton>
            <BigButton $w={73} $off>
              <BigIcon $top={9}>
                <Clipboard />
              </BigIcon>
              <BigLine>
                <RibbonText>Coller</RibbonText>
              </BigLine>
            </BigButton>
            <SmallList>
              <SmallButton $off>
                <Gap $w={3} />
                <SmallIcon $w={24}>
                  <Scissors />
                </SmallIcon>
                <RibbonText>Couper</RibbonText>
              </SmallButton>
              <SmallButton $off>
                <SmallIcon $w={27}>
                  <PathIcon />
                </SmallIcon>
                <RibbonText>Copier le chemin d’accès</RibbonText>
              </SmallButton>
              <SmallButton $off>
                <Gap $w={3} />
                <SmallIcon $w={24}>
                  <PasteShortcut />
                </SmallIcon>
                <RibbonText>Coller le raccourci</RibbonText>
              </SmallButton>
            </SmallList>
          </GroupBody>
          <GroupLabel>
            <RibbonText>Presse-papiers</RibbonText>
          </GroupLabel>
        </Group>

        <Group $w={322}>
          <GroupBody $left={1}>
            <BigButton $w={75} $off>
              <BigIcon $top={10}>
                <Gap $w={8} />
                <MoveTo />
              </BigIcon>
              <BigLine>
                <RibbonText>Déplacer</RibbonText>
              </BigLine>
              <BigLine>
                <RibbonText>vers</RibbonText>
                <Caret color="#6f6f6f" />
              </BigLine>
            </BigButton>
            <BigButton $w={54} $off>
              <BigIcon $top={7}>
                <Gap $w={10} />
                <CopyTo />
              </BigIcon>
              <BigLine>
                <RibbonText>Copier</RibbonText>
              </BigLine>
              <BigLine $gap={8}>
                <RibbonText>vers</RibbonText>
                <Caret color="#6f6f6f" />
              </BigLine>
            </BigButton>
            <Gap $w={10} />
            <GroupRule />
            <BigButton $w={88}>
              <BigIcon $top={12}>
                <Cross />
              </BigIcon>
              <BigLine>
                <RibbonText>Supprimer</RibbonText>
              </BigLine>
              <BigLine>
                <Caret color="#000" />
              </BigLine>
            </BigButton>
            <BigButton $w={79} $off>
              <BigIcon $top={12}>
                <Rename />
              </BigIcon>
              <BigLine>
                <RibbonText>Renommer</RibbonText>
              </BigLine>
            </BigButton>
          </GroupBody>
          <GroupLabel $shift={4}>
            <RibbonText>Organiser</RibbonText>
          </GroupLabel>
        </Group>

        <Group $w={244}>
          <GroupBody $left={1}>
            <BigButton $w={77}>
              <BigIcon $top={11}>
                <BigFolder />
                <Gap $w={3} />
              </BigIcon>
              <BigLine>
                <RibbonText>Nouveau</RibbonText>
              </BigLine>
              <BigLine>
                <RibbonText>dossier</RibbonText>
              </BigLine>
            </BigButton>
            <Gap $w={2} />
            <SmallList>
              <SmallButton>
                <SmallIcon $w={27}>
                  <NewItem />
                </SmallIcon>
                <RibbonText>Nouvel élément</RibbonText>
                <Gap $w={5} />
                <Caret color="#000" />
              </SmallButton>
              <SmallButton>
                <SmallIcon $w={27}>
                  <EasyAccess />
                </SmallIcon>
                <RibbonText>Accès rapide</RibbonText>
                <Gap $w={5} />
                <Caret color="#000" />
              </SmallButton>
            </SmallList>
          </GroupBody>
          <GroupLabel $shift={4}>
            <RibbonText>Nouveau</RibbonText>
          </GroupLabel>
        </Group>

        <Group $w={202}>
          <GroupBody $left={1}>
            <BigButton $w={86}>
              <BigIcon $top={10}>
                <CheckSheet w={32} h={42} />
              </BigIcon>
              <BigLine>
                <RibbonText>Propriétés</RibbonText>
              </BigLine>
              <BigLine>
                <Caret color="#000" />
              </BigLine>
            </BigButton>
            <Gap $w={3} />
            <SmallList $pitch={33}>
              <SmallButton $off>
                <SmallIcon $w={25}>
                  <OpenIcon />
                </SmallIcon>
                <RibbonText>Ouvrir</RibbonText>
                <Gap $w={7} />
                <Caret color="#6f6f6f" />
              </SmallButton>
              <SmallButton $off>
                <SmallIcon $w={25}>
                  <EditIcon />
                </SmallIcon>
                <RibbonText>Modifier</RibbonText>
              </SmallButton>
              <SmallButton>
                <SmallIcon $w={25}>
                  <History />
                </SmallIcon>
                <RibbonText>Historique</RibbonText>
              </SmallButton>
            </SmallList>
          </GroupBody>
          <GroupLabel $shift={4}>
            <RibbonText>Ouvrir</RibbonText>
          </GroupLabel>
        </Group>

        <Group $w={189}>
          <GroupBody $left={10}>
            <SmallList>
              <SmallButton>
                <SmallIcon $w={27}>
                  <SelectGrid on={[0, 1, 2, 3]} />
                </SmallIcon>
                <RibbonText>Sélectionner tout</RibbonText>
              </SmallButton>
              <SmallButton>
                <SmallIcon $w={27}>
                  <SelectGrid on={[]} />
                </SmallIcon>
                <RibbonText>Aucun</RibbonText>
              </SmallButton>
              <SmallButton>
                <SmallIcon $w={27}>
                  <SelectGrid on={[1, 2]} />
                </SmallIcon>
                <RibbonText>Inverser la sélection</RibbonText>
              </SmallButton>
            </SmallList>
          </GroupBody>
          <GroupLabel $shift={4}>
            <RibbonText>Sélectionner</RibbonText>
          </GroupLabel>
        </Group>
      </Ribbon>

      <NavRow>
        <NavButtons>
          <Arrow color="#707070" />
          <Gap $w={26} />
          <Flip>
            <Arrow color="#dcdcdc" />
          </Flip>
          <Gap $w={18} />
          <DownChevron w={11} />
          <Gap $w={17} />
          <svg width="16" height="20" viewBox="0 0 16 20">
            <path d="M8 19.500V2M1 8.500l7-7 7 7" fill="none" stroke="#707070" strokeWidth="1.900" />
          </svg>
        </NavButtons>
        <AddressBox>
          <Folder />
          <Gap $w={17} />
          {crumbs.map((c) => (
            <React.Fragment key={c.name}>
              <Chevron />
              <Gap $w={12} />
              <Text $w={c.width} $ls={c.ls} $drop={1}>
                {c.name}
              </Text>
            </React.Fragment>
          ))}
          <Spacer />
          <DownChevron w={14} />
          <Gap $w={4} />
          <Refresh>
            <svg width="17" height="17" viewBox="0 0 17 17">
              <path d="M12.300 2.800a6.600 6.600 0 1 1-8 .3" fill="none" stroke="#707070" strokeWidth="2.600" />
              <path d="M0 .8h7.500v7z" fill="#707070" />
            </svg>
          </Refresh>
        </AddressBox>
        <SearchBox>
          <Text $color="#757575" $w={182} $ls={-0.05} $drop={1}>
            Rechercher dans : n...
          </Text>
          <svg width="17" height="17" viewBox="0 0 17 17" fill="none" stroke="#707070">
            <circle cx="10.700" cy="6" r="4.700" strokeWidth="2.500" />
            <path d="M7.500 9.500L1 16" strokeWidth="3" />
          </svg>
        </SearchBox>
      </NavRow>

      <Main>
        <Sidebar>
          {sections.map((items, s) => (
            <React.Fragment key={s}>
              {s > 0 && <SideGap />}
              {items.map((it) => (
                <SideRow key={it.label} $root={it.root} $selected={it.selected}>
                  <SideIcon $root={it.root}>{it.icon}</SideIcon>
                  <Text $ls={it.ls} $drop={2}>
                    {it.label}
                  </Text>
                  {it.pinned && (
                    <PinSlot>
                      <Pin size={16} />
                    </PinSlot>
                  )}
                </SideRow>
              ))}
            </React.Fragment>
          ))}
        </Sidebar>
        <ScrollBar>
          <ScrollArrow>
            <DownChevron w={13} up color="#505050" />
          </ScrollArrow>
          <Thumb />
          <ScrollArrow>
            <DownChevron w={13} color="#505050" />
          </ScrollArrow>
        </ScrollBar>
        <PaneRule />
        <Files>
          {files.map((f) => (
            <File key={f}>
              <Sheet>
                <SheetPage />
                <SheetMark>TS</SheetMark>
                <SheetBadge>
                  <CodeBadge />
                </SheetBadge>
              </Sheet>
              <FileName>{f}</FileName>
            </File>
          ))}
        </Files>
      </Main>

      <StatusBar>
        <StatusText>
          <Text $ls={0.05}>6 élément(s)</Text>
        </StatusText>
        <Spacer />
        <ViewButton>
          <ListView />
        </ViewButton>
        <Gap $w={2} />
        <ViewButton $active>
          <Picture />
        </ViewButton>
        <Gap $w={7} />
      </StatusBar>

      <Taskbar>
        <TaskCell $w={72}>
          <WinLogo />
        </TaskCell>
        <TaskCell $w={72}>
          <Search />
        </TaskCell>
        <TaskCell $w={72}>
          <TaskView />
        </TaskCell>
        <TaskCell $w={80} $nudge={2}>
          <Mail />
        </TaskCell>
        <TaskCell $w={73} $active>
          <ExplorerIcon />
        </TaskCell>
        <TaskCell $w={75}>
          <Store />
        </TaskCell>
        <TaskCell $w={75}>
          <Edge />
        </TaskCell>
        <TaskCell $w={75}>
          <Firefox />
        </TaskCell>
        <TaskCell $w={75}>
          <Opera />
        </TaskCell>
        <TaskCell $w={75}>
          <Chrome />
        </TaskCell>
        <Spacer />
        <TrayItem $w={49}>
          <Weather />
        </TrayItem>
        <TrayItem $w={56}>
          <Text $size={19.500} $drop={2}>
            17°C
          </Text>
        </TrayItem>
        <TrayItem $w={146}>
          <Text $size={19.500} $drop={2} $ls={0.2}>
            Ciel couvert
          </Text>
        </TrayItem>
        <TrayItem $w={35}>
          <DownChevron w={19} up color="#fff" sw={1.200} />
        </TrayItem>
        <TrayItem $w={38}>
          <Battery />
        </TrayItem>
        <TrayItem $w={33}>
          <Wifi />
        </TrayItem>
        <TrayItem $w={40}>
          <Volume />
        </TrayItem>
        <TrayItem $w={36}>
          <MeetNow />
        </TrayItem>
        <TrayItem $w={49}>
          <Text $drop={1}>ENG</Text>
        </TrayItem>
        <Clock>
          <Text $ls={0.5}>09:14</Text>
          <Text $ls={0.5}>08/12/2024</Text>
        </Clock>
        <TrayItem $w={77}>
          <Gap $w={23} />
          <Notify />
        </TrayItem>
        <DesktopEdge />
      </Taskbar>
    </Window>
  );
}
